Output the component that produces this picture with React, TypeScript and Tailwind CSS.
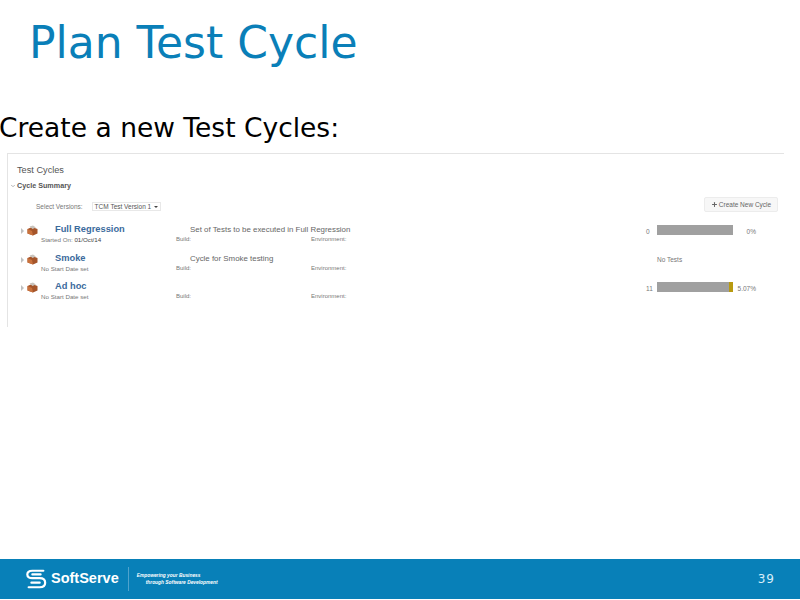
import { ChevronDown, Plus } from 'lucide-react'

const cycles = [
  { name: 'Full Regression', sub: <>Started On: <span className="text-[#444]">01/Oct/14</span></>, desc: 'Set of Tests to be executed in Full Regression', count: '0', pct: '0%', bar: 'gray' },
  { name: 'Smoke', sub: 'No Start Date set', desc: 'Cycle for Smoke testing', count: '', pct: '', bar: 'none' },
  { name: 'Ad hoc', sub: 'No Start Date set', desc: '', count: '11', pct: '5.07%', bar: 'partial' },
]

function BoxIcon() {
  return (
    <svg width="11" height="11" viewBox="0 0 11 11" className="shrink-0">
      <path d="M0.5 4 L5 2 L10.5 4 L10.5 8.5 L6 10.5 L0.5 8.5 Z" fill="#a5552a" />
      <path d="M0.5 4 L5 6 L6 10.5 L0.5 8.5 Z" fill="#c9723d" />
      <path d="M2.5 1.5 L6 0.5 L9 2.5 L5.5 4 Z" fill="#c9c4bd" />
    </svg>
  )
}

function CycleRow({ cycle }: { cycle: (typeof cycles)[number] }) {
  return (
    <div className="flex h-[28.5px]">
      <div className="w-[6px] pt-[5px] shrink-0">
        <div className="w-0 h-0 border-y-[3px] border-y-transparent border-l-[3px] border-l-[#c0c0c0]" />
      </div>
      <div className="pt-[2px] w-[14px] shrink-0"><BoxIcon /></div>
      <div className="w-[135px] shrink-0">
        <div className="text-[9.3px] leading-[13px] font-bold text-[#3b6a9c] pl-[14px] whitespace-nowrap">{cycle.name}</div>
        <div className="text-[6.2px] leading-[7px] text-[#777] whitespace-nowrap">{cycle.sub}</div>
      </div>
      <div className="w-[135px] shrink-0">
        <div className="text-[7.9px] leading-[13px] text-[#666] pl-[14px] whitespace-nowrap h-[13px]">{cycle.desc}</div>
        <div className="text-[6px] leading-[7px] text-[#777]">Build:</div>
      </div>
      <div className="w-[335px] shrink-0">
        <div className="h-[13px]" />
        <div className="text-[6px] leading-[7px] text-[#777]">Environment:</div>
      </div>
      <div className="w-[11px] shrink-0 text-[6.5px] leading-[17px] text-[#777]">{cycle.count}</div>
      {cycle.bar === 'none' ? (
        <div className="text-[6.5px] leading-[7px] pt-[4px] text-[#777]">No Tests</div>
      ) : (
        <>
          <div className="w-[76px] h-[9.5px] mt-[2px] bg-[#a0a0a0] flex justify-end shrink-0">
            {cycle.bar === 'partial' && <div className="w-[4px] bg-[#b89a10]" />}
          </div>
          <div className="w-[23px] text-right text-[6.5px] leading-[17px] text-[#777] shrink-0">{cycle.pct}</div>
        </>
      )}
    </div>
  )
}

function Logo() {
  return (
    <div className="flex items-center">
      <svg width="22" height="24" viewBox="0 0 24 24" fill="none" stroke="#fff" strokeWidth="2.4" strokeLinecap="round" className="-ml-[1px]">
        <path d="M20 3 H8 C4 3 2.5 5 2.5 7 C2.5 10 5 11 8 11 H16 C20 11 22 13 22 16 C22 19 20 21 16 21 H4" />
        <path d="M17 7 H8" />
        <path d="M7 16 H16" />
      </svg>
      <span className="ml-[4px] text-[14.5px] font-bold text-white font-['Liberation_Sans',sans-serif] whitespace-nowrap">SoftServe</span>
      <div className="w-px h-[24px] bg-[#4fa3cd] ml-[9px]" />
      <div className="ml-[8px] text-[4.85px] leading-[7px] font-bold italic text-white font-['Liberation_Sans',sans-serif] whitespace-nowrap">
        <div>Empowering your Business</div>
        <div className="pl-[9px]">through Software Development</div>
      </div>
    </div>
  )
}

export default function App() {
  return (
    <div className="w-[800px] h-[600px] bg-white flex flex-col overflow-hidden font-['DejaVu_Sans',sans-serif]">
      <h1 className="pl-[29px] pt-[16px] text-[44px] leading-[54px] text-[#0a7fb8] whitespace-nowrap">Plan Test Cycle</h1>
      <p className="mt-[41px] text-[26.5px] leading-[34px] text-black whitespace-nowrap -ml-[1px]">Create a new Test Cycles:</p>

      {/* Pasted screenshot */}
      <div className="ml-[7px] mt-[8px] w-[777px] h-[174px] border-t border-l border-[#e4e4e4] font-['Liberation_Sans',sans-serif] pl-[2px]">
        <div className="pl-[7px] pt-[10px] text-[9.2px] leading-[12px] text-[#555]">Test Cycles</div>
        <div className="flex items-center mt-[5px] h-[10px] text-[7.2px] font-bold text-[#555]">
          <ChevronDown className="w-[6px] h-[6px] text-[#999]" strokeWidth={3} />
          <span className="ml-[1px]">Cycle Summary</span>
        </div>
        <div className="flex items-start mt-[6px] h-[15px] pl-[26px] pr-[6px] text-[6.5px] text-[#777]">
          <div className="flex items-center mt-[5px] h-[9px]">
            <span>Select Versions:</span>
            <div className="ml-[9px] h-[9px] w-[69px] border border-[#e8e8e8] flex items-center justify-between px-[2px] text-[#555]">
              <span className="whitespace-nowrap">TCM Test Version 1</span>
              <div className="w-0 h-0 border-x-[2px] border-x-transparent border-t-[2px] border-t-[#444]" />
            </div>
          </div>
          <button className="ml-auto h-[15px] w-[74px] border border-[#ececec] bg-[#f7f7f7] rounded-[2px] flex items-center justify-center gap-[1px] text-[#666] whitespace-nowrap">
            <Plus className="w-[7px] h-[7px]" strokeWidth={3.5} />
            Create New Cycle
          </button>
        </div>
        <div className="mt-[11px] pl-[11px]">
          {cycles.map(c => <CycleRow key={c.name} cycle={c} />)}
        </div>
      </div>

      {/* Footer */}
      <footer className="mt-auto mb-px h-[40px] shrink-0 bg-[#0880b8] flex items-center justify-between pl-[26px] pr-[25px]">
        <Logo />
        <span className="text-[12px] tracking-[1px] text-[#d8eef8]">39</span>
      </footer>
    </div>
  )
}
